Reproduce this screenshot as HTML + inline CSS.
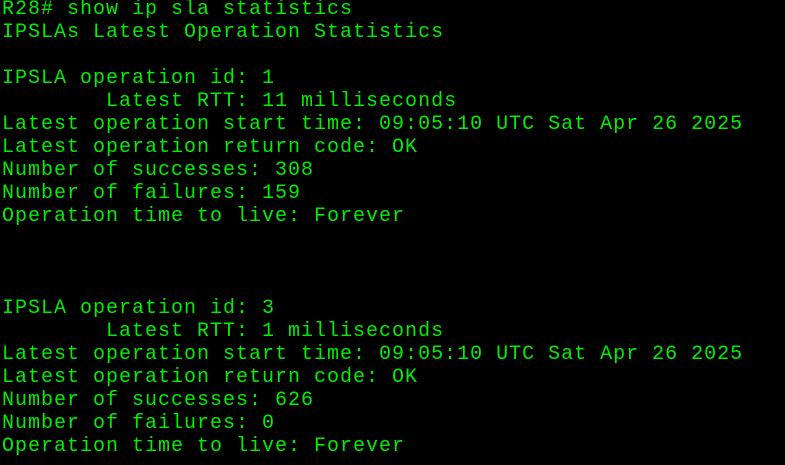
<!DOCTYPE html>
<html><head><meta charset="utf-8"><style>
html,body{margin:0;padding:0;background:#000;width:785px;height:465px;overflow:hidden}
pre{margin:0;position:absolute;left:2px;top:-2px;font-family:"Liberation Mono",monospace;font-size:20px;letter-spacing:1px;line-height:23px;color:#00ee00}
</style></head><body><pre>R28# show ip sla statistics
IPSLAs Latest Operation Statistics

IPSLA operation id: 1
        Latest RTT: 11 milliseconds
Latest operation start time: 09:05:10 UTC Sat Apr 26 2025
Latest operation return code: OK
Number of successes: 308
Number of failures: 159
Operation time to live: Forever



IPSLA operation id: 3
        Latest RTT: 1 milliseconds
Latest operation start time: 09:05:10 UTC Sat Apr 26 2025
Latest operation return code: OK
Number of successes: 626
Number of failures: 0
Operation time to live: Forever
</pre></body></html>
